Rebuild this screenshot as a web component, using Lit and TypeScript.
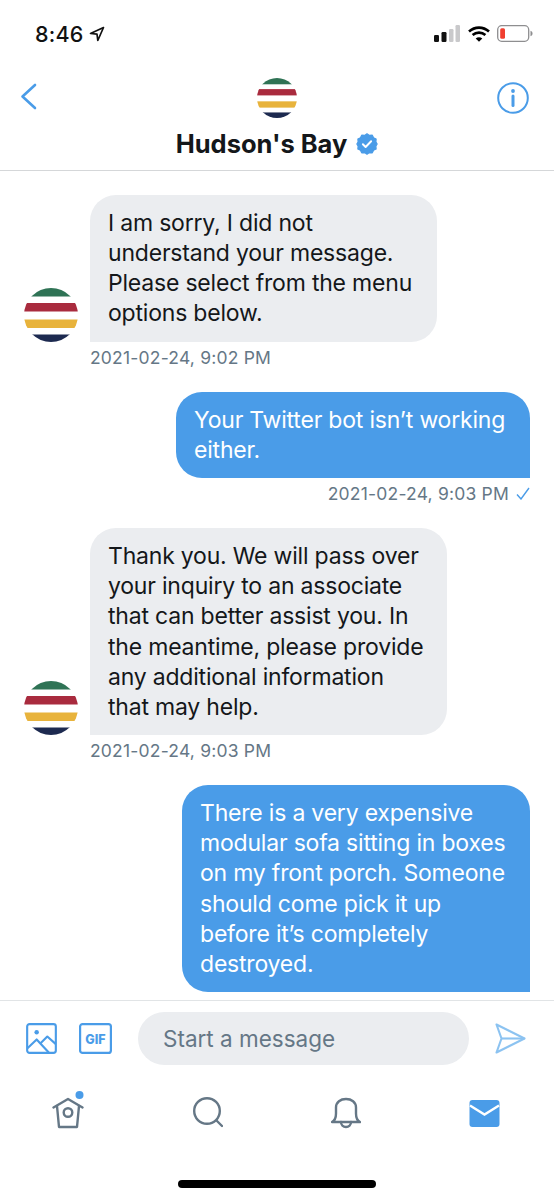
import { LitElement, html, css } from "lit";
import { customElement } from "lit/decorators.js";

const logo = (cls: string) => html`<svg class=${cls} viewBox="0 0 54 54">
  <defs><clipPath id="c-${cls}"><circle cx="27" cy="27" r="27"/></clipPath></defs>
  <g clip-path="url(#c-${cls})">
    <rect width="54" height="54" fill="#fff"/>
    <rect y="0" width="54" height="8.5" fill="#2f7355"/>
    <rect y="15" width="54" height="8.5" fill="#a92b3e"/>
    <rect y="31.5" width="54" height="8.5" fill="#e8b33c"/>
    <rect y="46.5" width="54" height="7.5" fill="#1d2a50"/>
  </g></svg>`;

@customElement("app-root")
export class AppRoot extends LitElement {
  static styles = css`
    :host { display: block; width: 554px; height: 1200px; background: #fff; overflow: hidden;
      font-family: Inter, "Noto Sans", "Liberation Sans", sans-serif; color: #14171a; }
    .page { display: flex; flex-direction: column; height: 1200px; }
    .status { height: 60px; flex: none; display: flex; align-items: center; justify-content: space-between;
      padding: 7px 21px 0 35px; box-sizing: border-box; }
    .time { display: flex; align-items: center; gap: 5px; font-size: 21.5px; font-weight: 500; color: #111; letter-spacing: 0.2px; }
    .sys { display: flex; align-items: center; gap: 7.5px; }
    .head { height: 111px; flex: none; box-sizing: border-box; border-bottom: 1.5px solid #d5d7d9; display: grid;
      grid-template-columns: 70px 1fr 70px; align-items: start; }
    .back { margin: 23px 0 0 20px; }
    .info { margin: 21.5px 0 0 13px; }
    .center { display: flex; flex-direction: column; align-items: center; padding-top: 18px; }
    .hlogo { width: 40px; height: 40px; }
    .name { display: flex; align-items: center; gap: 9px; margin-top: 10px; font-size: 25.5px; line-height: 32px; font-weight: 700; color: #14171a; letter-spacing: 0; }
    .list { flex: 1; min-height: 0; overflow: hidden; box-sizing: border-box; padding: 24px 24px 0; display: flex; flex-direction: column; }
    .row { display: flex; align-items: flex-end; gap: 12px; }
    .row.me { justify-content: flex-end; }
    .av { width: 54px; height: 54px; flex: none; }
    .bubble { box-sizing: border-box; padding: 12.5px 18px; font-size: 23px; line-height: 30.3px; border-radius: 26px; white-space: pre-line; letter-spacing: -0.2px; }
    .w1 { width: 347px; min-height: 147px; }
    .w2 { width: 354px; }
    .w3 { width: 357px; }
    .w4 { width: 348px; }
    .them .bubble { background: #ebedf0; color: #14171a; border-bottom-left-radius: 0; }
    .me .bubble { background: #4a9ce8; color: #fff; border-bottom-right-radius: 0; }
    .t { font-size: 17.5px; line-height: 32px; color: #657786; margin-bottom: 18.3px; letter-spacing: 0.2px; }
    .t.l { margin-left: 66px; }
    .t.r { display: flex; justify-content: flex-end; align-items: center; gap: 7px; }
    .compose { height: 85px; flex: none; box-sizing: border-box; border-top: 1.5px solid #e1e4e6; display: flex; align-items: center; padding: 0 0 10px 26px; }
    .field { width: 331px; height: 53px; box-sizing: border-box; margin-left: 26px; margin-right: 26px; padding-left: 25px; border-radius: 27px; background: #ebedf0;
      display: flex; align-items: center; font-size: 22.5px; color: #657786; }
    .gif { margin-left: 22px; }
    .tabs { height: 115px; flex: none; position: relative; display: flex; box-sizing: border-box; }
    .tab { display: flex; justify-content: center; padding-top: 6px; width: 138.5px; flex: none; }
    .home { width: 198px; height: 8px; border-radius: 4px; background: #000; position: absolute; left: 178px; bottom: 12px; }
  `;

  render() {
    return html`<div class="page">
      <div class="status">
        <div class="time">8:46
          <svg width="16" height="16" viewBox="0 0 16 16"><path d="M14.5 1.500 1.500 7.500l6.500.6.8 6.400z" fill="none" stroke="#111" stroke-width="1.7" stroke-linejoin="round"/></svg>
        </div>
        <div class="sys">
          <svg width="26" height="17" viewBox="0 0 26 17">
            <rect x="0" y="10" width="5" height="7" rx="1.2" fill="#111"/><rect x="7.5" y="7" width="5" height="10" rx="1.2" fill="#111"/>
            <rect x="15" y="4" width="4.5" height="13" rx="1.2" fill="#c9c9cb"/><rect x="21.5" y="0" width="4.500" height="17" rx="1.2" fill="#c9c9cb"/>
          </svg>
          <svg width="22" height="16" viewBox="0 0 22 16" fill="none" stroke="#000" stroke-width="2.6">
            <path d="M1 5.500C6.800.3 15.200.3 21 5.500"/><path d="M4.600 9c3.700-3.200 9.100-3.200 12.800 0"/><path d="M11 15.800 7.700 12.400c1.900-1.600 4.700-1.600 6.600 0z" fill="#000" stroke="none"/>
          </svg>
          <svg width="36" height="17" viewBox="0 0 36 17">
            <rect x=".7" y=".7" width="31" height="15.600" rx="4" fill="none" stroke="#8e8e90" stroke-width="1.3"/>
            <rect x="3.200" y="3.200" width="4.800" height="10.600" rx="1.500" fill="#f03f30"/>
            <path d="M33.500 5.700c1.300.4 2 1.500 2 2.800s-.7 2.400-2 2.800z" fill="#8e8e90"/>
          </svg>
        </div>
      </div>
      <div class="head">
        <svg class="back" width="17" height="27" viewBox="0 0 17 27" fill="none" stroke="#4a9ce8" stroke-width="2.600" stroke-linecap="round" stroke-linejoin="round"><path d="M15 2 2.500 13.500 15 25"/></svg>
        <div class="center">
          ${logo("hlogo")}
          <div class="name">Hudson's Bay
            <svg width="22" height="22" viewBox="0 0 24 24"><path fill="#4a9ce8" d="M12 1l2.600 1.700 3.100-.3 1.400 2.800 2.800 1.400-.3 3.100L23 12l-1.400 2.300.3 3.100-2.800 1.400-1.400 2.800-3.100-.3L12 23l-2.600-1.700-3.100.3-1.400-2.800-2.800-1.400.3-3.100L1 12l1.400-2.300-.3-3.100 2.800-1.400 1.400-2.800 3.100.3z" stroke="#4a9ce8" stroke-width="1.500" stroke-linejoin="round"/><path d="M7.500 12.300l3 3 6-6.300" fill="none" stroke="#fff" stroke-width="2.100" stroke-linecap="round" stroke-linejoin="round"/></svg>
          </div>
        </div>
        <svg class="info" width="32" height="32" viewBox="0 0 32 32" fill="none" stroke="#4a9ce8"><circle cx="16" cy="16" r="14.800" stroke-width="2"/><path d="M16 14v9.500" stroke-width="3" stroke-linecap="round"/><circle cx="16" cy="9" r="1.900" fill="#4a9ce8" stroke="none"/></svg>
      </div>
      <div class="list">
        <div class="row them">${logo("av")}<div class="bubble w1">I am sorry, I did not
understand your message.
Please select from the menu
options below.</div></div>
        <div class="t l">2021-02-24, 9:02 PM</div>
        <div class="row me"><div class="bubble w2">Your Twitter bot isn’t working
either.</div></div>
        <div class="t r">2021-02-24, 9:03 PM
          <svg width="14" height="13" viewBox="0 0 14 13" fill="none" stroke="#4a9ce8" stroke-width="1.400"><path d="M1 7.500l4 4.500 8-11"/></svg></div>
        <div class="row them">${logo("av")}<div class="bubble w3">Thank you. We will pass over
your inquiry to an associate
that can better assist you. In
the meantime, please provide
any additional information
that may help.</div></div>
        <div class="t l">2021-02-24, 9:03 PM</div>
        <div class="row me"><div class="bubble w4">There is a very expensive
modular sofa sitting in boxes
on my front porch. Someone
should come pick it up
before it’s completely
destroyed.</div></div>
      </div>
      <div class="compose">
        <svg width="31" height="31" viewBox="0 0 32 32" fill="none" stroke="#4a9ce8" stroke-width="2.200" stroke-linejoin="round"><rect x="1.200" y="1.200" width="29.600" height="29.600" rx="2.500"/><circle cx="11" cy="9.500" r="2.300" fill="#4a9ce8" stroke="none"/><path d="M1.500 26 11 17l12.500 13.500"/><path d="M15 21l7-7 8.500 7.500"/></svg>
        <svg class="gif" width="33" height="31" viewBox="0 0 33 31"><rect x="1.100" y="1.100" width="30.800" height="28.800" rx="2.500" fill="none" stroke="#4a9ce8" stroke-width="2.200"/><text x="16.500" y="20.500" font-family="Inter, sans-serif" font-size="12.500" font-weight="800" fill="#4a9ce8" text-anchor="middle">GIF</text></svg>
        <div class="field">Start a message</div>
        <svg width="31" height="31" viewBox="0 0 31 31" fill="none" stroke="#8cc3f1" stroke-width="2.100" stroke-linejoin="round"><path d="M1.500 1.500 29.500 15.500 1.500 29.500 6.500 15.500z"/><path d="M6.500 15.500h23"/></svg>
      </div>
      <div class="tabs">
        <div class="tab"><svg width="34" height="40" viewBox="0 0 34 40" fill="none" stroke="#657786" stroke-width="2.400" stroke-linejoin="round" stroke-linecap="round">
          <path d="M1.500 16.500 16 8l14.500 8.500"/><path d="M5 15l2 21h18l2-21"/><circle cx="16" cy="21.500" r="4.300"/><circle cx="27.500" cy="4" r="4" fill="#4a9ce8" stroke="none"/></svg></div>
        <div class="tab"><svg width="30" height="40" viewBox="0 0 30 40" fill="none" stroke="#657786" stroke-width="2.400" stroke-linecap="round"><circle cx="14" cy="20" r="12.800"/><path d="M23.500 29.500 29 35"/></svg></div>
        <div class="tab"><svg width="30" height="40" viewBox="0 0 30 40" fill="none" stroke="#657786" stroke-width="2.400" stroke-linecap="round" stroke-linejoin="round"><path d="M1 31c3-1.500 4-4 4-8.500v-6c0-5.500 4.500-8.500 10-8.500s10 3 10 8.500v6c0 4.500 1 7 4 8.500z"/><path d="M10 31c0 3 2.200 5 5 5s5-2 5-5"/></svg></div>
        <div class="tab"><svg width="31" height="40" viewBox="0 0 31 40"><rect x="0.500" y="9" width="30" height="27" rx="3" fill="#4a9ce8"/><path d="M1 14.500 15.500 23.500 30 14.500" fill="none" stroke="#fff" stroke-width="2.400"/></svg></div>
        <div class="home"></div>
      </div>
    </div>`;
  }
}
